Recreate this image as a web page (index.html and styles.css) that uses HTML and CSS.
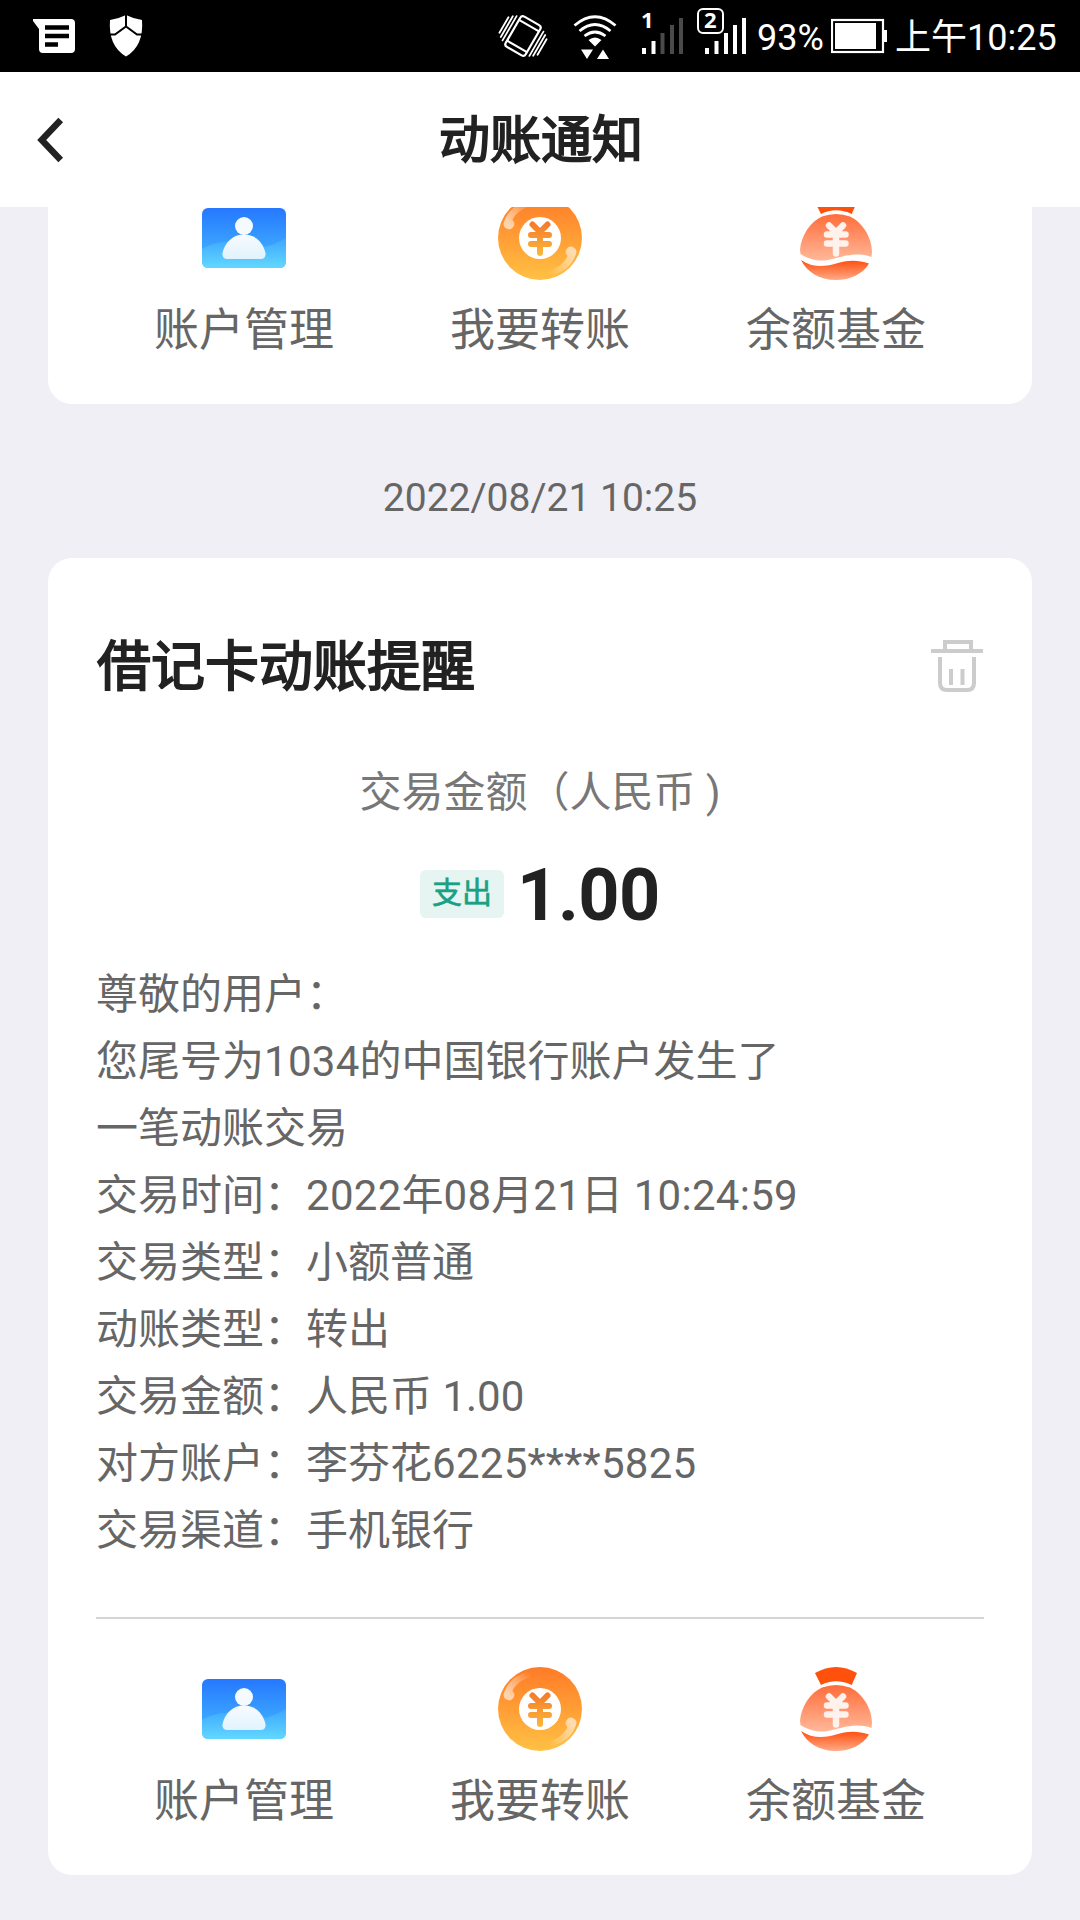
FILE: index.html
```html
<!DOCTYPE html>
<html lang="zh-CN">
<head>
    <meta charset="UTF-8">
    <meta name="viewport" content="width=device-width, initial-scale=1.0">
    <title>动账通知</title>
    <link rel="stylesheet" href="styles.css">
</head>
<body>
    <!-- 公用图标 -->
    <svg class="sprite" width="0" height="0">
        <defs>
            <linearGradient id="blue" x1="0" y1="0" x2="0" y2="1">
                <stop offset="0" stop-color="#2678ff"/>
                <stop offset="1" stop-color="#46bcff"/>
            </linearGradient>
            <linearGradient id="wave" x1="0" y1="0" x2="0" y2="1">
                <stop offset="0" stop-color="#3da6ff"/>
                <stop offset="1" stop-color="#62d8ff"/>
            </linearGradient>
            <linearGradient id="person" x1="0" y1="0" x2="0" y2="1">
                <stop offset="0" stop-color="#f8fbff"/>
                <stop offset="1" stop-color="#e0f3fd"/>
            </linearGradient>
            <linearGradient id="gold" x1="0" y1="0" x2="0" y2="1">
                <stop offset="0" stop-color="#ff7b27"/>
                <stop offset="1" stop-color="#ffc144"/>
            </linearGradient>
            <linearGradient id="yen" gradientUnits="userSpaceOnUse" x1="0" y1="25" x2="0" y2="60">
                <stop offset="0" stop-color="#f4782a"/>
                <stop offset="1" stop-color="#fbb83c"/>
            </linearGradient>
            <linearGradient id="shineA" gradientUnits="userSpaceOnUse" x1="10" y1="28" x2="34" y2="8">
                <stop offset="0" stop-color="#fff" stop-opacity=".6"/>
                <stop offset="1" stop-color="#fff" stop-opacity="0"/>
            </linearGradient>
            <linearGradient id="shineB" gradientUnits="userSpaceOnUse" x1="74" y1="56" x2="50" y2="77">
                <stop offset="0" stop-color="#fff" stop-opacity=".6"/>
                <stop offset="1" stop-color="#fff" stop-opacity="0"/>
            </linearGradient>
            <linearGradient id="bag" x1="0" y1="0" x2="0" y2="1">
                <stop offset="0" stop-color="#ff6c3a"/>
                <stop offset="1" stop-color="#ffb899"/>
            </linearGradient>
            <linearGradient id="bagBottom" x1="0" y1="0" x2="0" y2="1">
                <stop offset="0" stop-color="#ff4d0c"/>
                <stop offset="1" stop-color="#ffab88"/>
            </linearGradient>
        </defs>
        <symbol id="icon-account" viewBox="0 0 84 84">
            <rect y="12" width="84" height="60" rx="6" fill="url(#blue)"/>
            <path d="M0 53C11 47 24 44 36 47C50 52 62 55 84 42V66A6 6 0 0 1 78 72H6A6 6 0 0 1 0 66Z" fill="url(#wave)"/>
            <circle cx="42" cy="30" r="9" fill="#f5faff"/>
            <path d="M42 38.500C53 38.500 61 46 63.500 57C64 61 62 63 59 63H25C22 63 20 61 20.500 57C23 46 31 38.500 42 38.500Z" fill="url(#person)"/>
        </symbol>
        <symbol id="icon-transfer" viewBox="0 0 84 84">
            <circle cx="42" cy="42" r="42" fill="url(#gold)"/>
            <path d="M6 26C10 14 20 6 33 5V10C24 12 17 18 14.500 24A5.300 5.300 0 1 1 6 26Z" fill="url(#shineA)"/>
            <path d="M78 58C74 70 64 78 51 79V75C60 72 67 66 69.500 60A5.300 5.300 0 1 1 78 58Z" fill="url(#shineB)"/>
            <circle cx="42" cy="42" r="21" fill="#fff"/>
            <path d="M34.500 28.500L42 36L49.500 28.500M33 39H51M33 48H51M42 37V57" fill="none" stroke="url(#yen)" stroke-width="6" stroke-linecap="round"/>
        </symbol>
        <symbol id="icon-fund" viewBox="0 0 84 84">
            <path d="M21 6Q42 -6 63 6L57.700 18Q42 10.500 27 18Z" fill="#ff500c"/>
            <path d="M28 20.500Q42 15.500 56 20.500C68 26 78 41 78 56L77.500 61C60 55 46 62 34 64C22 66 13 62 6.500 58L6 54C7 40 16 26 28 20.500Z" fill="url(#bag)"/>
            <path d="M7 64C19 72 31 71 44 67C55 64 64 64 75 67.500C69 78 56 84 42 84C25 84 13 76 7 64Z" fill="url(#bagBottom)"/>
            <path d="M35 29.500L42 36.500L49 29.500M33 38.500H51.500M33 47.500H51.500M42 37V57.500" fill="none" stroke="#fff1eb" stroke-width="6.500" stroke-linecap="round"/>
        </symbol>
    </svg>

    <!-- 状态栏 -->
    <div class="status">
        <svg class="status-left" width="120" height="72" viewBox="30 0 120 72">
            <path d="M33 19H71Q75 19 75 23V49Q75 53 71 53H43Q39 53 39 49V29L33 21Z" fill="#fff"/>
            <path d="M45 27.500H69M45 36H69M45 44.500H58" stroke="#000" stroke-width="4.500"/>
            <path d="M126 15Q134 19 142 20Q144 46 126 56.500Q108 46 110 20Q118 19 126 15Z" fill="#fff"/>
            <path d="M126 14V26.500M110 34.500H115L126 26.500L137 34.500H142" fill="none" stroke="#000" stroke-width="2"/>
        </svg>
        <div class="status-right">
            <svg width="186" height="72" viewBox="498 0 186 72">
                <!-- 震动 -->
                <g transform="rotate(30 523 36)" fill="none" stroke="#fff" stroke-width="2.200" stroke-linecap="round">
                    <rect x="511.500" y="18.500" width="23" height="35" rx="3"/>
                    <path d="M512 24H534M512 48H534"/>
                    <path stroke-width="1.800" d="M507.500 22V50M504.300 24V48M501 27V45M538.500 22V50M541.700 24V48M545 27V45"/>
                </g>
                <!-- WiFi -->
                <g fill="none" stroke="#fff" stroke-width="2.800">
                    <path d="M574.500 25.500Q595 8 615.500 25.500M579.500 31Q595 18 610.500 31M584.500 36Q595 28 605.500 36"/>
                </g>
                <path d="M588.500 40Q595 35 601.500 40L595 46.500ZM581 49.500H593L587 59ZM597 59H609L603 49.500Z" fill="#fff"/>
                <!-- 卡1信号 -->
                <path d="M642 48H646V54H642ZM651.500 41H655.500V54H651.500Z" fill="#fff"/>
                <path d="M660.500 33H664.500V54H660.500ZM670 25H674V54H670ZM679 18H683V54H679Z" fill="#4a4a4a"/>
                <text class="sim" x="641" y="28">1</text>
            </svg>
            <svg class="sim-two" width="52" height="72" viewBox="696 0 52 72">
                <rect x="698" y="9" width="25" height="24" rx="5" fill="none" stroke="#fff" stroke-width="2"/>
                <path d="M705 48H709V54H705ZM714.500 41H718.500V54H714.500ZM724 33H728V54H724ZM733 25H737V54H733ZM742 18H746V54H742Z" fill="#fff"/>
                <text class="sim" x="704" y="28">2</text>
            </svg>
            <span class="percent">93%</span>
            <svg width="56" height="72" viewBox="831 0 56 72">
                <rect x="832" y="20" width="51" height="32" fill="none" stroke="#fff" stroke-width="2.200"/>
                <path d="M835 23H876V49H835ZM883 30H887V42H883Z" fill="#fff"/>
            </svg>
            <span class="clock">上午10:25</span>
        </div>
    </div>

    <!-- 标题栏 -->
    <div class="header">
        <svg width="28" height="46" viewBox="0 0 28 46">
            <path d="M23.700 3L4.700 23L23.700 43" fill="none" stroke="#222" stroke-width="6.500"/>
        </svg>
        <h1>动账通知</h1>
    </div>

    <div class="content">
        <!-- 上一条通知 -->
        <div class="card card-prev">
            <div class="actions">
                <div class="action"><svg><use href="#icon-account"/></svg><span>账户管理</span></div>
                <div class="action"><svg><use href="#icon-transfer"/></svg><span>我要转账</span></div>
                <div class="action"><svg><use href="#icon-fund"/></svg><span>余额基金</span></div>
            </div>
        </div>

        <p class="date">2022/08/21 10:25</p>

        <div class="card">
            <div class="card-title">
                <h2>借记卡动账提醒</h2>
                <!-- 删除 -->
                <svg width="54" height="54" viewBox="0 0 54 54" fill="none" stroke="#ccc" stroke-width="4">
                    <path d="M1 12H53M15 12V3H41V12M10 18V44Q10 51 17 51H37Q44 51 44 44V18M21 30V46M32.500 30V46"/>
                </svg>
            </div>
            <p class="label">交易金额（人民币 )</p>
            <div class="amount">
                <span class="tag">支出</span>
                <strong>1.00</strong>
            </div>
            <div class="detail">
                <p>尊敬的用户：</p>
                <p>您尾号为<span class="num">1034</span>的中国银行账户发生了<br>一笔动账交易</p>
                <p>交易时间：<span class="num">2022</span>年<span class="num">08</span>月<span class="num">21</span>日<span class="num"> 10:24:59</span></p>
                <p>交易类型：小额普通</p>
                <p>动账类型：转出</p>
                <p>交易金额：人民币 1.00</p>
                <p>对方账户：李芬花<span class="num">6225****5825</span></p>
                <p>交易渠道：手机银行</p>
            </div>
            <div class="actions actions-line">
                <div class="action"><svg><use href="#icon-account"/></svg><span>账户管理</span></div>
                <div class="action"><svg><use href="#icon-transfer"/></svg><span>我要转账</span></div>
                <div class="action"><svg><use href="#icon-fund"/></svg><span>余额基金</span></div>
            </div>
        </div>
    </div>
</body>
</html>
```
FILE: styles.css
```css
*{
    margin:0;
    padding:0;
    box-sizing:border-box;
}
body{
    display:flex;
    flex-direction:column;
    height:1920px;
    overflow:hidden;
    background-color:#f0eff5;
    color:#666;
    font-family:Roboto,"Noto Sans CJK SC",sans-serif;
}
svg{
    display:block;
    flex-shrink:0;
}
.sprite{
    position:absolute;
}

/* 状态栏 */
.status{
    display:flex;
    justify-content:space-between;
    height:72px;
    flex-shrink:0;
    padding:0 24px 0 30px;
    background-color:#000;
    color:#fff;
    font-size:36px;
    line-height:76px;
    white-space:nowrap;
}
.status-right{
    display:flex;
}
.sim{
    fill:#fff;
    font-family:"Noto Sans",sans-serif;
    font-size:22px;
    font-weight:bold;
}
.sim-two{
    margin-left:12px;
}
.percent{
    width:74px;
    margin-left:9px;
}
.clock{
    width:161px;
    margin-left:8px;
}

/* 标题栏 */
.header{
    display:flex;
    align-items:center;
    height:135px;
    flex-shrink:0;
    padding:0 37px;
    background-color:#fff;
}
.header h1{
    flex:1;
    padding:0 26px 7px 0;
    font-size:51px;
    text-align:center;
}
/* 用描边加粗，比bold略细 */
h1, h2{
    color:#222;
    font-weight:normal;
    -webkit-text-stroke:1.8px #222;
}

.content{
    flex:1;
    padding:0 48px;
    overflow:hidden;
}
.card{
    height:1317px;
    padding:71px 48px 0;
    border-radius:24px;
    background-color:#fff;
}
.card-prev{
    display:flow-root;
    height:197px;
    padding-top:0;
    border-radius:0 0 24px 24px;
}
/* 已滚动到标题栏下方的部分 */
.card-prev .actions{
    margin-top:-11px;
}
.date{
    height:154px;
    padding-top:64px;
    font-size:39px;
    line-height:60px;
    text-align:center;
}

.card-title{
    display:flex;
    align-items:center;
    justify-content:space-between;
    height:74px;
}
.card-title h2{
    padding:0 0 7px 1px;
    font-size:54px;
}
.label{
    margin-top:56px;
    color:#777;
    font-size:42px;
    line-height:67px;
    text-align:center;
}
.amount{
    display:flex;
    align-items:center;
    justify-content:center;
    gap:13px;
    height:135px;
    padding-top:1px;
}
.tag{
    width:84px;
    height:48px;
    border-radius:6px;
    background-color:#e6f5f2;
    color:#1aa083;
    font-size:30px;
    line-height:46px;
    text-align:center;
    -webkit-text-stroke:0.6px #1aa083;
}
.amount strong{
    padding-top:3px;
    color:#222;
    font-size:72px;
    letter-spacing:-0.5px;
    line-height:84px;
}
.detail{
    font-size:42px;
    line-height:67px;
}
.num{
    letter-spacing:0.27px;
}

/* 底部快捷入口 */
.actions{
    display:flex;
}
.actions-line{
    margin-top:53px;
    padding-top:48px;
    border-top:2px solid #d4d4d4;
}
.action{
    display:flex;
    flex:1;
    flex-direction:column;
    align-items:center;
    font-size:45px;
    line-height:66px;
}
.action svg{
    width:84px;
    height:84px;
    margin-bottom:18px;
}
```
